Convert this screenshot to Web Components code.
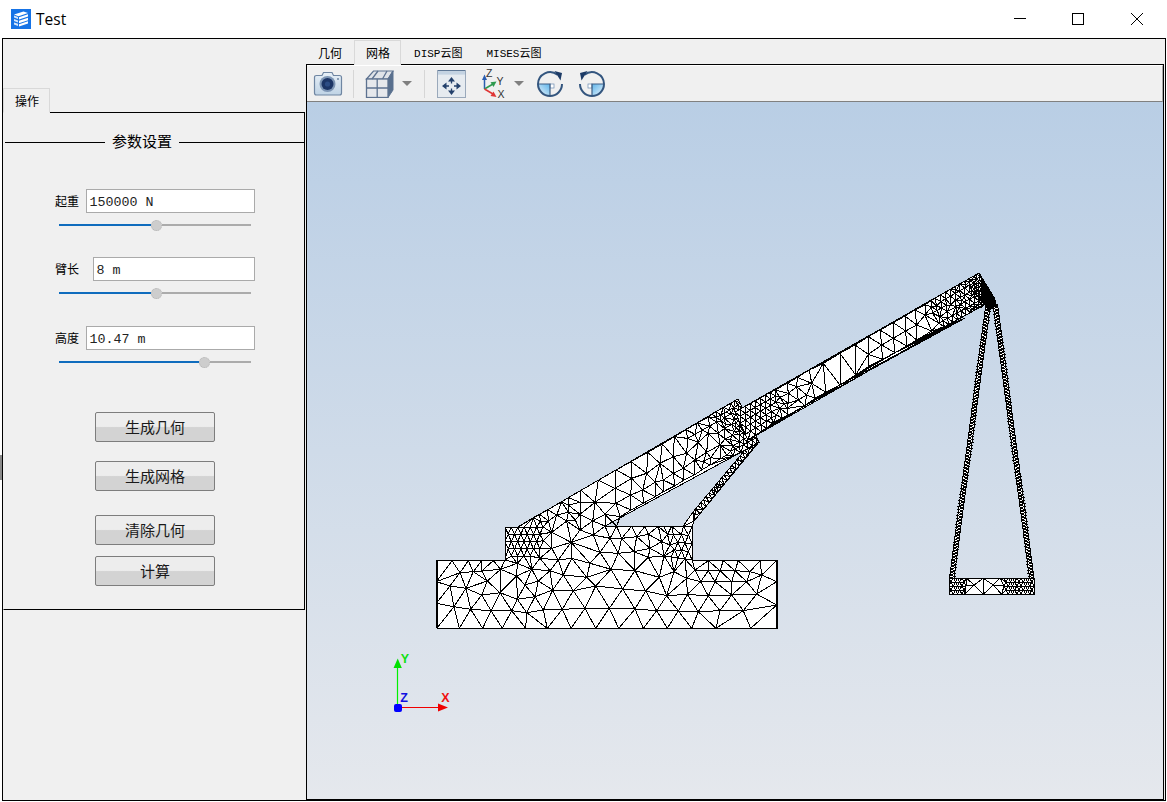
<!DOCTYPE html>
<html><head><meta charset="utf-8"><title>Test</title>
<style>
html,body{margin:0;padding:0;background:#fff;width:1167px;height:802px;overflow:hidden;font-family:"Noto Sans CJK SC","Liberation Sans",sans-serif;color:#000}
</style></head>
<body>
<app-window>
  <title-bar slot="title" caption="Test"></title-bar>
  <side-panel slot="left">
    <q-tab selected>操作</q-tab>
    <params-pane slot="pane">
      <group-legend>参数设置</group-legend>
      <param-field style="margin-top:37px" label="起重" gap="7" value="150000 N" pos="97"></param-field>
      <param-field style="margin-top:26px" label="臂长" gap="14" value="8 m" pos="97"></param-field>
      <param-field style="margin-top:27px" label="高度" gap="7" value="10.47 m" pos="145"></param-field>
      <q-button style="margin-top:44px">生成几何</q-button>
      <q-button style="margin-top:19px">生成网格</q-button>
      <q-button style="margin-top:24px">清除几何</q-button>
      <q-button style="margin-top:11px">计算</q-button>
    </params-pane>
  </side-panel>
  <view-panel slot="right">
    <q-tab slot="tabs">几何</q-tab>
    <q-tab slot="tabs" selected>网格</q-tab>
    <q-tab slot="tabs" small>DISP云图</q-tab>
    <q-tab slot="tabs" small>MISES云图</q-tab>
    <view-toolbar slot="toolbar"></view-toolbar>
    <mesh-view slot="view"></mesh-view>
  </view-panel>
</app-window>
<script>
function shadow(el,html){el.attachShadow({mode:'open'}).innerHTML=html;return el.shadowRoot}

customElements.define('app-window',class extends HTMLElement{connectedCallback(){shadow(this,`
<style>
:host{display:block;width:1167px;height:802px}
.row{display:flex}
.gutter{width:2px;flex:none}
.gutter i{display:block;width:2px;height:25px;margin-top:417px;background:#8a8a8a}
.frame{box-sizing:border-box;width:1164px;height:763px;border:1px solid #000;background:#f0f0f0;display:flex}
</style>
<slot name="title"></slot>
<div class="row"><div class="gutter"><i></i></div>
<div class="frame"><slot name="left"></slot><slot name="right"></slot></div></div>`)}});

customElements.define('title-bar',class extends HTMLElement{connectedCallback(){shadow(this,`
<style>
:host{display:flex;align-items:center;height:38px;background:#fff;font:15.5px "Open Sans","Liberation Sans",sans-serif;color:#000}
svg.logo{margin-left:11px;flex:none}
span{margin-left:5px;flex:1}
.c{width:58px;height:38px;display:flex;align-items:center;justify-content:center;flex:none}
.end{width:1px}
</style>
<svg class="logo" width="20" height="20" viewBox="0 0 20 20"><rect width="20" height="20" fill="#1673e6"/>
<path fill="#fff" d="M3 5.5 12.5 2.5 17 4 7.5 7.2Z"/><path fill="#d6e6fb" d="M3 6.5 7 8V10L3 8.6Z M3 10 7 11.4V13.4L3 12Z M3 13.4 7 14.8V17L3 15.5Z"/>
<path fill="#fff" d="M8 8.2 17 5.2V7.6L8 10.6Z M8 11.8 17 8.8V11.2L8 14.2Z M8 15.2 17 12.2V14.4L8 17.4Z"/></svg>
<span>${this.getAttribute('caption')}</span>
<div class="c"><svg width="14" height="14" viewBox="0 0 14 14"><path d="M1 6.5H13" stroke="#000" fill="none"/></svg></div>
<div class="c" style="margin-right:1px"><svg width="14" height="14" viewBox="0 0 14 14"><rect x="1.5" y="1.5" width="11" height="11" stroke="#000" fill="none"/></svg></div>
<div class="c"><svg width="14" height="14" viewBox="0 0 14 14"><path d="M1 1 13 13M13 1 1 13" stroke="#000" fill="none"/></svg></div>
<div class="end"></div>`)}});

customElements.define('side-panel',class extends HTMLElement{connectedCallback(){shadow(this,`
<style>:host{display:flex;flex-direction:column;width:302px;flex:none;padding-top:48px;margin-right:1px;box-sizing:content-box}
.t{display:flex;height:25px}</style>
<div class="t"><slot></slot></div><slot name="pane"></slot>`)}});

customElements.define('q-tab',class extends HTMLElement{connectedCallback(){
const sel=this.hasAttribute('selected'),small=this.hasAttribute('small');
shadow(this,`<style>
:host{display:flex;align-items:center;box-sizing:border-box;position:relative;z-index:2;flex:none;white-space:nowrap;
 font:${small?'11px':'12px'} ${small?'"Liberation Mono",':''}"Noto Sans CJK SC",monospace;color:#000;
 padding:${sel?'0 10px 0 11px':small?'0 11px 0 13px':'0 12px 0 11px'};height:${sel?'25px':'24px'};margin-bottom:${sel?'-1px':'0'};
 margin-top:1px;
 ${sel?'background:#f0f0f0;border:1px solid #d9d9d9;border-bottom-color:#f0f0f0;':''}}
</style><slot></slot>`)}});

customElements.define('params-pane',class extends HTMLElement{connectedCallback(){shadow(this,`
<style>:host{display:flex;flex-direction:column;box-sizing:border-box;width:302px;height:498px;
 border:1px solid #000;border-left-color:#f0f0f0;padding-top:19px}</style><slot></slot>`)}});

customElements.define('group-legend',class extends HTMLElement{connectedCallback(){shadow(this,`
<style>:host{display:flex;align-items:center;height:20px;font-size:15px;line-height:18px;padding-left:1px}
i{display:block;height:1px;background:#000}i.a{width:100px}i.b{flex:1}
span{margin:0 7px;white-space:nowrap;height:20px;line-height:18px}</style><i class="a"></i><span><slot></slot></span><i class="b"></i>`)}});

customElements.define('param-field',class extends HTMLElement{connectedCallback(){
const p=+this.getAttribute('pos');
shadow(this,`<style>
:host{display:block;margin-left:51px;width:200px}
.r{display:flex;align-items:center;height:24px}
label{font-size:12px;width:24px;flex:none;line-height:24px;white-space:nowrap}
.in{flex:1;box-sizing:border-box;height:24px;margin-left:${this.getAttribute('gap')}px;background:#fff;border:1px solid #aaa;
 font:13.33px/25px "Liberation Mono",monospace;padding-left:2.5px;white-space:pre;color:#222;overflow:hidden}
</style>
<div class="r"><label>${this.getAttribute('label')}</label><div class="in">${this.getAttribute('value')}</div></div>
<q-slider pos="${p}"></q-slider>`)}});

customElements.define('q-slider',class extends HTMLElement{connectedCallback(){
const p=+this.getAttribute('pos');
shadow(this,`<style>
:host{display:flex;align-items:center;height:12px;width:192px;margin:6px 0 0 4px}
.a{height:2px;width:${p-5}px;background:#0f6cbd;flex:none}
.k{width:11px;height:11px;border-radius:50%;background:#cdcdcd;flex:none;box-sizing:border-box;border:1px dotted #b5b5b5}
.b{height:2px;flex:1;background:#ababab}
</style><div class="a"></div><div class="k"></div><div class="b"></div>`)}});

customElements.define('q-button',class extends HTMLElement{connectedCallback(){shadow(this,`
<style>:host{display:flex;align-items:center;justify-content:center;box-sizing:border-box;width:120px;height:30px;margin-left:91px;flex:none;
 border:1px solid #7d7d7d;border-radius:2px;font-size:15px;color:#1a1a1a;padding-bottom:2px;
 background:linear-gradient(#ededed 0,#ededed 48%,#d3d3d3 52%,#d3d3d3 100%)}</style><slot></slot>`)}});

customElements.define('view-panel',class extends HTMLElement{connectedCallback(){shadow(this,`
<style>:host{display:flex;flex-direction:column;width:858px;flex:none}
.tabs{display:flex;height:25px;padding-left:1px}
.pane{box-sizing:border-box;width:858px;height:736px;border:1px solid #000;display:flex;flex-direction:column}
</style><div class="tabs"><slot name="tabs"></slot></div>
<div class="pane"><slot name="toolbar"></slot><slot name="view"></slot></div>`)}});

customElements.define('view-toolbar',class extends HTMLElement{connectedCallback(){
const tri=`<svg width="10" height="5" viewBox="0 0 10 5"><path d="M0 0H10L5 5Z" fill="#808080"/></svg>`;
const rot=(flip)=>`<svg width="28" height="28" viewBox="0 0 28 28" style="transform:${flip?'scaleX(-1)':'none'}">
<defs><linearGradient id="g${flip?1:0}" x1="0" y1="1" x2="1" y2="0"><stop offset="0" stop-color="#eaf4fc"/><stop offset="1" stop-color="#5db4ea"/></linearGradient></defs>
<path d="M2.5 14H14V25.5A11.5 11.5 0 0 1 2.5 14Z" fill="url(#g${flip?1:0})"/>
<rect x="14" y="14" width="4" height="4" fill="#fff" stroke="#6b8bb0" stroke-width=".7"/>
<path d="M2 14H14V26" fill="none" stroke="#3f5f85" stroke-width="1.2"/>
<path d="M21.5 4.8A12 12 0 0 0 2 14A12 12 0 0 0 26 14" fill="none" stroke="#33557e" stroke-width="2"/>
<path d="M18.5 1 26 3 24.5 10.5Z" fill="#1d3b66"/></svg>`;
shadow(this,`<style>
:host{display:flex;align-items:center;box-sizing:border-box;height:37px;flex:none;background:#f0f0f0;border-top:1px solid #fff;border-bottom:1px solid #808080;border-right:1px solid #a8a8a8}
svg{flex:none;display:block}
.s{width:1px;height:28px;background:#d6d6d6;flex:none}
</style>
<svg style="margin-left:6px" width="30" height="26" viewBox="0 0 30 26">
<defs><linearGradient id="cam" x1="0" y1="0" x2="0" y2="1"><stop offset="0" stop-color="#e8f0f7"/><stop offset="1" stop-color="#bfd3e5"/></linearGradient></defs>
<path d="M1.5 6.5Q1.5 4.5 3.5 4.5H9L10.5 1.5H19L20.5 4.5H26.5Q28.5 4.5 28.5 6.5V22Q28.5 24 26.5 24H3.5Q1.5 24 1.5 22Z" fill="url(#cam)" stroke="#6f86a2" stroke-width="1.2"/>
<circle cx="14.5" cy="13" r="8" fill="#7d95b4"/><circle cx="14.5" cy="13" r="6" fill="#1c3566"/><circle cx="14.5" cy="13" r="2.6" fill="#2c4c84"/>
<circle cx="25" cy="8" r="1" fill="#6f86a2"/></svg>
<div class="s" style="margin-left:10px"></div>
<svg style="margin-left:11px" width="29" height="28" viewBox="0 0 29 28">
<path d="M1.5 9 8.5 1H28L23 9Z" fill="#dfe3e8" stroke="#5d7290" stroke-width="1.2"/>
<path d="M23 9 28 1V20L23 27.5Z" fill="#59708e" stroke="#5d7290"/>
<rect x="1.5" y="9" width="21.5" height="18.5" fill="#e6e8ec" stroke="#5d7290" stroke-width="1.3"/>
<path d="M12.2 9V27.5M1.5 18H23M7 9 13 1M17.5 9 22 1" stroke="#5d7290" stroke-width="1.3" fill="none"/></svg>
<span style="margin-left:8px;display:flex">${tri}</span>
<div class="s" style="margin-left:12px"></div>
<svg style="margin-left:12px" width="29" height="28" viewBox="0 0 29 28">
<rect x=".5" y=".5" width="28" height="27" fill="#e6ebf0" stroke="#9aa9bb"/><rect x="1" y="0" width="27" height="1.2" fill="#5f7896"/><rect x="1" y="1.2" width="27" height="3.4" fill="#c4d3e2"/>
<g fill="#23406b"><path d="M14.5 7 11 11.5H18Z M14.5 25 11 20.5H18Z M5 16 9.5 12.5V19.5Z M24 16 19.5 12.5V19.5Z"/></g>
<path d="M14.5 11V13.5M14.5 18.5V21M9 16H12M17 16H20" fill="none" stroke="#23406b" stroke-width="1.3"/></svg>
<svg style="margin-left:16px" width="25" height="31" viewBox="0 0 25 31">
<path d="M2.5 21V10" stroke="#2a5db0" stroke-width="1.5"/><path d="M2.5 6.5 0 12H5Z" fill="#2a5db0"/>
<path d="M2.5 21 11 16" stroke="#2f9a4e" stroke-width="1.5"/><path d="M14.5 13.5 8.5 14.2 11.5 19Z" fill="#2f9a4e"/>
<path d="M2.5 21 11 26" stroke="#e03535" stroke-width="1.5"/><path d="M14.5 29 8.5 28 11.5 23.5Z" fill="#e03535"/>
<text x="4" y="9" font-family="Liberation Sans" font-size="10.5" fill="#333">Z</text>
<text x="14.5" y="17" font-family="Liberation Sans" font-size="10.5" fill="#333">Y</text>
<text x="15.5" y="30" font-family="Liberation Sans" font-size="10.5" fill="#333">X</text></svg>
<span style="margin-left:7px;display:flex">${tri}</span>
<span style="margin-left:12px;display:flex">${rot(false)}</span>
<span style="margin-left:14px;display:flex">${rot(true)}</span>`)}});

/* ---- mesh ---- */
function delaunay(P){
  const pts=P.map((p,i)=>[p[0]+1e-3*Math.sin(i*12.9898),p[1]+1e-3*Math.cos(i*78.233)]);
  const n=pts.length;pts.push([-1e4,-1e4],[3e4,-1e4],[500,3e4]);
  const cc=(a,b,c)=>{const A=pts[a],B=pts[b],C=pts[c];
    const d=2*(A[0]*(B[1]-C[1])+B[0]*(C[1]-A[1])+C[0]*(A[1]-B[1]));
    const a2=A[0]*A[0]+A[1]*A[1],b2=B[0]*B[0]+B[1]*B[1],c2=C[0]*C[0]+C[1]*C[1];
    const x=(a2*(B[1]-C[1])+b2*(C[1]-A[1])+c2*(A[1]-B[1]))/d,y=(a2*(C[0]-B[0])+b2*(A[0]-C[0])+c2*(B[0]-A[0]))/d;
    return {a,b,c,x,y,r:(A[0]-x)**2+(A[1]-y)**2}};
  let T=[cc(n,n+1,n+2)];
  for(let i=0;i<n;i++){
    const p=pts[i],keep=[],edges=new Map();
    for(const t of T){
      if((p[0]-t.x)**2+(p[1]-t.y)**2<t.r){
        for(const [u,v] of [[t.a,t.b],[t.b,t.c],[t.c,t.a]]){
          const k=u<v?u+'_'+v:v+'_'+u;edges.set(k,edges.has(k)?null:[u,v]);}
      }else keep.push(t);
    }
    T=keep;
    for(const e of edges.values())if(e)T.push(cc(e[0],e[1],i));
  }
  return T.filter(t=>t.a<n&&t.b<n&&t.c<n).map(t=>[t.a,t.b,t.c]);
}
const inPoly=(p,poly)=>{let c=false;for(let i=0,j=poly.length-1;i<poly.length;j=i++){
  const a=poly[i],b=poly[j];if((a[1]>p[1])!=(b[1]>p[1])&&p[0]<(b[0]-a[0])*(p[1]-a[1])/(b[1]-a[1])+a[0])c=!c}return c};
const lerp=(a,b,t)=>[a[0]+(b[0]-a[0])*t,a[1]+(b[1]-a[1])*t];
class Mesh{
  constructor(poly){this.poly=poly;this.p=[];for(let i=0;i<poly.length;i++)this.add(poly[i],.5)}
  add(q,md){if(this.p.every(r=>(r[0]-q[0])**2+(r[1]-q[1])**2>=md*md))this.p.push(q)}
  list(arr,ox,oy,md=7){for(let i=0;i<arr.length;i+=2)this.add([arr[i]/3+ox,arr[i+1]/3+oy],md)}
  quad(a,b,c,d,h){
    const L=Math.hypot(b[0]-a[0],b[1]-a[1]),W=Math.hypot(d[0]-a[0],d[1]-a[1]);
    const nu=Math.max(1,Math.round(L/(h*.9))),nv=Math.max(1,Math.round(W/h));
    for(let j=0;j<=nv;j++)for(let i=0;i<=nu;i++){
      const u=Math.min(1,(i+(j%2)*.5)/nu),v=j/nv;
      this.add(lerp(lerp(a,b,u),lerp(d,c,u),v),h*.72);
    }
  }
  svg(){
    const tr=delaunay(this.p),P=this.p,seen=new Set();let d='';
    for(const t of tr){
      const g=[(P[t[0]][0]+P[t[1]][0]+P[t[2]][0])/3,(P[t[0]][1]+P[t[1]][1]+P[t[2]][1])/3];
      if(!inPoly(g,this.poly))continue;
      for(const [u,v] of [[t[0],t[1]],[t[1],t[2]],[t[2],t[0]]]){
        const k=u<v?u+'_'+v:v+'_'+u;if(seen.has(k))continue;seen.add(k);
        d+=`M${P[u][0].toFixed(1)} ${P[u][1].toFixed(1)}L${P[v][0].toFixed(1)} ${P[v][1].toFixed(1)}`;
      }
    }
    const pp=this.poly.map(p=>p.join(',')).join(' ');
    return `<polygon points="${pp}" fill="#fff"/><path d="${d}" fill="none" stroke="#000"/><polygon points="${pp}" fill="none" stroke="#000"/>`;
  }
}
function strip(a,b,c,d,step){
  const L=Math.hypot(b[0]-a[0],b[1]-a[1]),n=Math.round(L/step);
  let z=`M${a[0]} ${a[1]}`;
  for(let i=0;i<=n;i++){const t=i/n,q=lerp(a,b,t),r=lerp(d,c,t+.5/n>1?1:t+.5/n);z+=`L${q[0].toFixed(1)} ${q[1].toFixed(1)}L${r[0].toFixed(1)} ${r[1].toFixed(1)}`}
  const pp=[a,b,c,d].map(p=>p.join(',')).join(' ');
  return `<polygon points="${pp}" fill="#fff" stroke="#000"/><path d="${z}" fill="none" stroke="#000"/>`;
}
function buildMesh(){
  const main=new Mesh([[437,628],[777,628],[777,560],[692,560],[692,527],[605,526],[759,442.5],[738,399],[518,527],[505,527],[505,560],[437,560]]);
  main.list([155,412,130,437,155,460,175,495,215,490,240,405,213,442,300,472,280,420,270,505],500,395,6);
  main.list([19,385,88,385,158,385,217,385,287,385,352,385,423,385,497,385,566,385,640,385,712,385,785,385,858,385,962,385,1040,385,
   1040,245,1040,315,19,245,19,310,66,182,115,182,155,182,190,182,835,182,880,182,925,182,990,182,
   72,320,122,328,183,332,245,332,290,338,340,330,397,328,465,325,538,325,615,327,680,332,745,333,805,335,870,332,940,332,
   60,258,108,265,155,285,210,278,262,298,315,290,368,270,430,272,497,258,578,267,647,273,710,287,772,283,835,288,905,285,980,282,
   90,218,130,215,172,243,155,213,212,208,260,228,285,255,325,243,400,225,470,232,543,208,615,212,688,232,770,235,812,245,855,245,905,245,950,245,995,225,
   835,212,870,212,915,212,960,215,795,210,732,215,655,172,612,155,565,160,515,157,485,193,430,178,385,178,330,175,262,190,305,208,360,212],430,500);
  main.list([315,394,350,394,395,394,435,394,475,394,515,394,550,394,
   100,368,143,344,205,308,243,286,295,256,348,225,393,200,443,172,487,147,523,125,558,104,592,84,625,66,
   360,365,393,345,430,325,465,305,490,290,525,272,552,255,583,240,605,225,630,210,660,192,680,180,
   285,322,345,280,392,300,428,285,440,235,395,250,480,205,520,185,560,175,520,235,490,255,465,262,550,220,595,142,620,172,585,195,625,115,655,115,660,150,
   240,358,205,352,170,360,145,378,278,378,315,358,348,325,200,378,240,322,205,330,
   330,430,365,430,410,425,445,418,485,440,520,420,535,400,510,450,450,460,405,465,358,470],500,395);
  main.quad([505,527],[543,527],[543,556],[505,556],7);
  main.quad([518,527],[545,511],[552,530],[538,540],7.5);
  main.quad([545,511],[570,497],[585,515],[556,530],10);
  main.quad([680,432],[738,399],[759,442.5],[700,474],9);
  main.quad([712,414],[738,399],[759,442.5],[733,456],5.5);
  main.quad([726,406],[738,399],[759,442.5],[746,449],4);
  main.quad([664,527],[692,527],[692,560],[664,556],7.5);
  const st=new Mesh([[683,526.5],[693,512],[745,450],[759,442],[694,521],[692,526.5]]);
  st.quad([693,512],[745,450],[754,447],[694,521],4.6);
  const bm=new Mesh([[735,412],[979,273],[995,299],[987,303],[748,440]]);
  bm.list([255,405,322,370,352,352,388,330,430,310,480,280,525,255,565,230,600,210,640,188,675,168,705,150,735,135,765,115,
   280,488,325,465,375,437,405,415,437,397,480,375,527,345,565,320,607,298,645,278,680,258,710,240,755,213,
   395,370,350,380,565,283,605,255,640,235,677,213,710,195,735,165,770,138,780,170,812,135,325,400,300,412,300,445,325,430,355,420,380,405],680,260,5);
  bm.quad([735,412],[775,390],[790,413],[748,440],6);
  bm.quad([926,303],[979,273],[990,302],[942,328],6);
  bm.quad([950,289],[979,273],[990,302],[962,320],4);
  bm.quad([968,279],[979,273],[990,302],[978,310],3);
  const bx=new Mesh([[949,578],[1034,578],[1034,594],[949,594]]);
  bx.list([110,55,160,55,210,55,105,103,160,103,215,103,132,75,190,75],930,560,4);
  bx.quad([949,578],[966,578],[966,594],[949,594],4.5);
  bx.quad([1004,578],[1034,578],[1034,594],[1004,594],4.5);
  return main.svg()+st.svg()+bm.svg()
   +strip([986,304],[949.5,578],[954,578],[990.5,304],3)
   +strip([997.5,304],[1034,578],[1029.5,578],[993,304],3)
   +bx.svg()
   +`<polygon points="982,281 995,298 997,306 988,311 985,305 980,301" fill="#000"/>`;
}
customElements.define('mesh-view',class extends HTMLElement{connectedCallback(){shadow(this,`
<style>:host{display:block;width:856px;height:697px;flex:none;background:linear-gradient(#b9cee5,#e5e8ed)}
svg{display:block}</style>
<svg width="856" height="697" viewBox="307 102 856 697" shape-rendering="crispEdges">${buildMesh()}
<g shape-rendering="auto">
<path d="M397.5 705V668" stroke="#00f000" stroke-width="1.2"/><path d="M397.7 658.5 401.8 668H393.6Z" fill="#00e000"/>
<path d="M400 707.5H438" stroke="#f00000" stroke-width="1.2"/><path d="M448 707.5 438 703.5V711.5Z" fill="#f00000"/>
<rect x="394" y="704" width="8" height="8" rx="2" fill="#0000ff"/>
<g font-family="Liberation Sans" font-weight="700" font-size="12.5" text-anchor="middle">
<text x="405" y="662.5" fill="#10e010">Y</text><text x="404" y="702" fill="#1010e0">Z</text><text x="445.5" y="702" fill="#f01010">X</text></g>
</g></svg>`)}});
</script>
</body></html>
